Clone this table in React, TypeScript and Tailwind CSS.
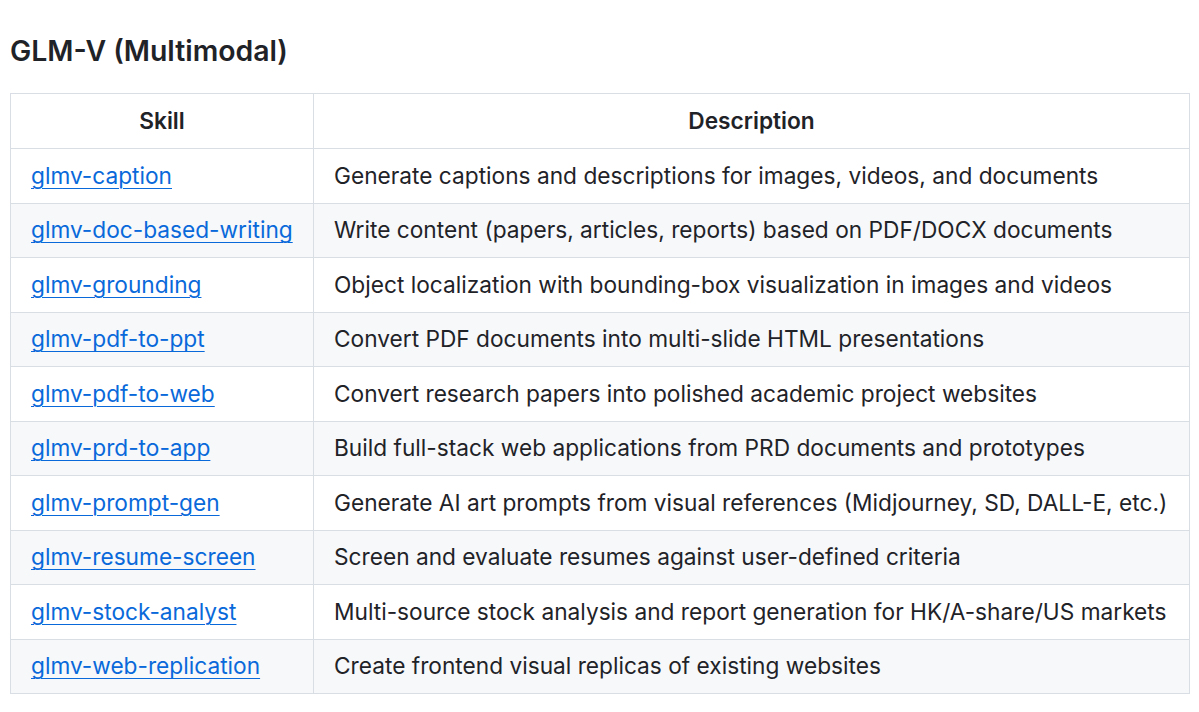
import React from "react";

interface Skill {
  name: string;
  description: string;
}

const skills: Skill[] = [
  { name: "glmv-caption", description: "Generate captions and descriptions for images, videos, and documents" },
  { name: "glmv-doc-based-writing", description: "Write content (papers, articles, reports) based on PDF/DOCX documents" },
  { name: "glmv-grounding", description: "Object localization with bounding-box visualization in images and videos" },
  { name: "glmv-pdf-to-ppt", description: "Convert PDF documents into multi-slide HTML presentations" },
  { name: "glmv-pdf-to-web", description: "Convert research papers into polished academic project websites" },
  { name: "glmv-prd-to-app", description: "Build full-stack web applications from PRD documents and prototypes" },
  { name: "glmv-prompt-gen", description: "Generate AI art prompts from visual references (Midjourney, SD, DALL-E, etc.)" },
  { name: "glmv-resume-screen", description: "Screen and evaluate resumes against user-defined criteria" },
  { name: "glmv-stock-analyst", description: "Multi-source stock analysis and report generation for HK/A-share/US markets" },
  { name: "glmv-web-replication", description: "Create frontend visual replicas of existing websites" },
];

const App: React.FC = () => {
  return (
    <div className="min-h-screen bg-white px-[10px] pt-[32px] text-[#1f2328] font-['Inter',sans-serif]">
      <h3 className="text-[28.4px] font-semibold leading-[38px] mb-[23px]">GLM-V (Multimodal)</h3>

      {/* Skills table */}
      <table className="w-[1180px] border-collapse table-fixed text-[22.7px]">
        <colgroup>
          <col className="w-[303px]" />
          <col />
        </colgroup>
        <thead>
          <tr className="bg-white">
            <th className="border border-[#d8dee4] h-[55px] px-[20px] font-semibold text-center">Skill</th>
            <th className="border border-[#d8dee4] h-[55px] px-[20px] font-semibold text-center">Description</th>
          </tr>
        </thead>
        <tbody>
          {skills.map((skill, i) => (
            <tr key={skill.name} className={i % 2 === 1 ? "bg-[#f6f8fa]" : "bg-white"}>
              <td className="border border-[#d8dee4] h-[54.5px] px-[20px] whitespace-nowrap">
                <a href="#" className="text-[#0969da] underline underline-offset-[4px] decoration-1">
                  {skill.name}
                </a>
              </td>
              <td className="border border-[#d8dee4] h-[54.5px] px-[20px] whitespace-nowrap">{skill.description}</td>
            </tr>
          ))}
        </tbody>
      </table>
    </div>
  );
};

export default App;
